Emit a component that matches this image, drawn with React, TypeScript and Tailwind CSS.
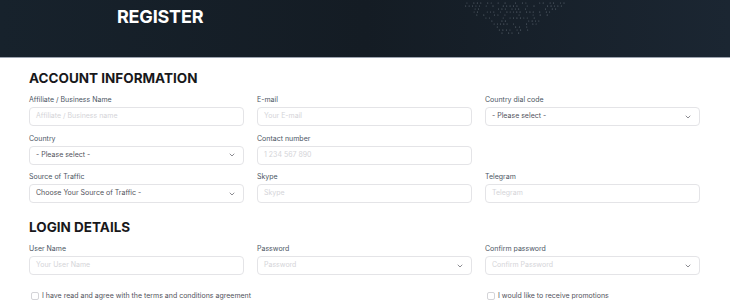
import { ChevronDown } from 'lucide-react';

type Field = {
  label: string;
  placeholder?: string;
  select?: string;
  chevron?: boolean;
};

const accountFields: (Field | null)[] = [
  { label: 'Affiliate / Business Name', placeholder: 'Affiliate / Business name' },
  { label: 'E-mail', placeholder: 'Your E-mail' },
  { label: 'Country dial code', select: '- Please select -' },
  { label: 'Country', select: '- Please select -' },
  { label: 'Contact number', placeholder: '1 234 567 890' },
  null,
  { label: 'Source of Traffic', select: 'Choose Your Source of Traffic -' },
  { label: 'Skype', placeholder: 'Skype' },
  { label: 'Telegram', placeholder: 'Telegram' },
];

const loginFields: Field[] = [
  { label: 'User Name', placeholder: 'Your User Name' },
  { label: 'Password', placeholder: 'Password', chevron: true },
  { label: 'Confirm password', placeholder: 'Confirm Password', chevron: true },
];

const DotCloud = () => {
  const dots: { x: number; y: number; o: number }[] = [];
  for (let r = 0; r < 11; r++) {
    const half = 52 - r * 4.2;
    const count = Math.max(2, Math.round(half / 3.4));
    for (let i = 0; i <= count * 2; i++) {
      const x = 55 - half + (i * half) / count + ((r % 2) * 1.5);
      const seed = Math.sin(r * 12.9 + i * 78.2) * 43758.5;
      const rnd = seed - Math.floor(seed);
      if (rnd < 0.45) continue;
      dots.push({ x, y: 3 + r * 3, o: 0.2 + rnd * 0.35 });
    }
  }
  return (
    <svg width="110" height="40" viewBox="0 0 110 40" className="absolute left-[457px] top-0">
      {dots.map((d, k) => (
        <circle key={k} cx={d.x} cy={d.y} r="0.5" fill="#cbd5e1" opacity={d.o} />
      ))}
    </svg>
  );
};

const FieldBox = ({ field }: { field: Field }) => (
  <div className="flex flex-col">
    <label className="text-[7px] leading-[10px] text-[#4b5563] mb-[2px]">{field.label}</label>
    <div className="h-[19px] rounded-[4px] border border-[#e4e4e7] bg-white flex items-center justify-between pl-[6px] pr-[7px]">
      {field.select ? (
        <span className="text-[7px] text-[#52525b]">{field.select}</span>
      ) : (
        <span className="text-[7px] text-[#d4d4d8]">{field.placeholder}</span>
      )}
      {(field.select || field.chevron) && (
        <ChevronDown className="w-[8px] h-[8px] text-[#52525b]" strokeWidth={2} />
      )}
    </div>
  </div>
);

const CheckRow = ({ text }: { text: string }) => (
  <div className="flex items-center gap-[3px] pl-[2px] whitespace-nowrap">
    <span className="shrink-0 w-[8px] h-[8px] rounded-[2px] border border-[#d4d4d8]" />
    <span className="text-[7px] leading-[10px] text-[#52525b]">{text}</span>
  </div>
);

export default function App() {
  return (
    <div className="w-[730px] h-[306px] overflow-hidden bg-white font-['Inter','Liberation_Sans',sans-serif]">
      <header className="relative h-[58px] border-b border-[#9ca3af] bg-gradient-to-r from-[#17222c] via-[#141c24] to-[#1b2632] overflow-hidden">
        <h1 className="absolute left-[117px] top-[5px] text-[18px] leading-[24px] font-bold text-white tracking-[-0.2px]">
          REGISTER
        </h1>
        <DotCloud />
      </header>

      <div className="px-[29px]">
        <h2 className="mt-[12px] text-[13.5px] leading-[16px] font-bold text-[#18181b]">
          ACCOUNT INFORMATION
        </h2>
        <div className="mt-[9px] grid grid-cols-3 gap-x-[13px] gap-y-[7.5px] w-[671px]">
          {accountFields.map((f, i) => (f ? <FieldBox key={i} field={f} /> : <div key={i} />))}
        </div>

        <h2 className="mt-[16px] text-[13.5px] leading-[16px] font-bold text-[#18181b]">
          LOGIN DETAILS
        </h2>
        <div className="mt-[9px] grid grid-cols-3 gap-x-[13px] w-[671px]">
          {loginFields.map((f, i) => (
            <FieldBox key={i} field={f} />
          ))}
        </div>

        <div className="mt-[16px] grid grid-cols-3 gap-x-[13px] w-[671px]">
          <CheckRow text="I have read and agree with the terms and conditions agreement" />
          <div />
          <CheckRow text="I would like to receive promotions" />
        </div>
      </div>
    </div>
  );
}
